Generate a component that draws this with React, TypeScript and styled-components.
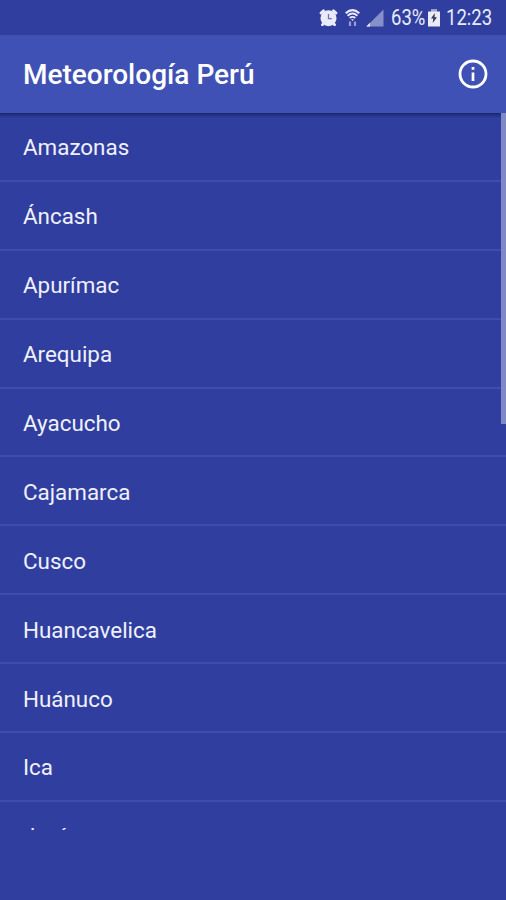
import React from "react";
import styled, { createGlobalStyle } from "styled-components";

const GlobalStyle = createGlobalStyle`
  * { box-sizing: border-box; }
  body { margin: 0; background: #303f9f; }
`;

const Screen = styled.div`
  display: flex;
  flex-direction: column;
  width: 506px;
  height: 900px;
  overflow: hidden;
  background: #303f9f;
  color: #fff;
  font-family: Roboto, "Liberation Sans", sans-serif;
`;

const StatusBar = styled.div`
  display: flex;
  flex: none;
  align-items: center;
  justify-content: flex-end;
  height: 35px;
  padding-right: 14px;
  color: #e9ebfa;
`;

const StatusIcon = styled.svg<{ $gap: number }>`
  display: block;
  flex: none;
  margin-right: ${(p) => p.$gap}px;
`;

const StatusText = styled.span<{ $width: number; $gap?: number }>`
  display: block;
  flex: none;
  width: ${(p) => p.$width}px;
  margin-right: ${(p) => p.$gap ?? 0}px;
  font-size: 21.5px;
  line-height: 35px;
  white-space: nowrap;
  transform: scaleX(0.86);
  transform-origin: left center;
`;

const Toolbar = styled.header`
  display: flex;
  flex: none;
  align-items: center;
  justify-content: space-between;
  height: 78px;
  padding: 0 17px 0 23px;
  background: #3f51b5;
`;

const Title = styled.h1`
  margin: 2px 0 0;
  font-size: 28px;
  font-weight: 500;
  line-height: 34px;
  white-space: nowrap;
`;

const InfoButton = styled.button`
  display: flex;
  padding: 0;
  border: 0;
  background: none;
  color: inherit;
`;

const Viewport = styled.main`
  display: flex;
  flex: none;
  align-items: flex-start;
  height: 716.5px;
  overflow: hidden;
  background: linear-gradient(rgba(14, 22, 80, 0.6), rgba(14, 22, 80, 0) 5px);
`;

const List = styled.ul`
  flex: 1;
  margin: 0 -5px 0 0;
  padding: 0;
  list-style: none;
`;

const Row = styled.li`
  display: flex;
  align-items: center;
  height: 68.9px;
  padding: 2px 23px 0;
  border-bottom: 2px solid #3e4eae;
  color: #eff0fb;
  font-size: 22.4px;
  line-height: 30px;
`;

const ScrollThumb = styled.div`
  flex: none;
  width: 5px;
  height: 311px;
  background: #7f89c4;
`;

const regions = [
  "Amazonas",
  "Áncash",
  "Apurímac",
  "Arequipa",
  "Ayacucho",
  "Cajamarca",
  "Cusco",
  "Huancavelica",
  "Huánuco",
  "Ica",
  "Junín",
];

const AlarmIcon = () => (
  <StatusIcon $gap={7} width="19" height="18" viewBox="0 0 19 18" fill="currentColor">
    <circle cx="9.500" cy="9.200" r="8" />
    <path
      d="M2 4 4.500 1.700M17 4 14.500 1.700M3.400 15.800l1.600-1.600M15.600 15.800l-1.600-1.600"
      fill="none"
      stroke="currentColor"
      strokeWidth="2.800"
      strokeLinecap="round"
    />
    <path d="M9.500 5V9.600H12.800" fill="none" stroke="#6a75b5" strokeWidth="1.300" />
  </StatusIcon>
);

const WifiIcon = () => (
  <StatusIcon $gap={6} width="15" height="18" viewBox="0 0 15 18" fill="none" stroke="currentColor">
    <path d="M.7 4.300Q7.500-2 14.300 4.300" strokeWidth="2" />
    <path d="M2.600 6.700Q7.500 2.500 12.400 6.700" strokeWidth="1.900" />
    <path d="M4.700 9Q7.500 6.700 10.300 9" strokeWidth="1.800" />
    <path d="M6 10.300h3L7.500 12Z" fill="currentColor" stroke="none" />
    <path d="M5 17v-4.500M10 12.500V17" strokeWidth="2.200" opacity=".55" />
  </StatusIcon>
);

const SignalIcon = () => (
  <StatusIcon $gap={7} width="18" height="18" viewBox="0 0 18 18" fill="currentColor">
    <path d="M17.500.5V17.500H.5Z" opacity=".48" />
    <path d="M4 13.800v3.700H.3Z" />
  </StatusIcon>
);

const BatteryIcon = () => (
  <StatusIcon $gap={6} width="12" height="18" viewBox="0 0 12 18" fill="currentColor">
    <path d="M3 .5h6v2H12V17.500H0V2.500h3Z" />
    <path d="M3 .5h6v2H3Z" fill="#a5a9c9" />
    <path d="M6.800 4 3 9.500h2.300l-.6 4.500L9 8.200H6.600Z" fill="#35384f" />
  </StatusIcon>
);

const InfoIcon = () => (
  <svg width="32" height="32" viewBox="0 0 32 32" fill="none" stroke="currentColor">
    <circle cx="16" cy="16" r="13" strokeWidth="2.800" />
    <path d="M16 14.500v8.500M16 9v2.800" strokeWidth="2.700" />
  </svg>
);

export default function App() {
  return (
    <>
      <GlobalStyle />
      <Screen>
        <StatusBar>
          <AlarmIcon />
          <WifiIcon />
          <SignalIcon />
          <StatusText $width={35} $gap={2}>63%</StatusText>
          <BatteryIcon />
          <StatusText $width={46}>12:23</StatusText>
        </StatusBar>
        <Toolbar>
          <Title>Meteorología Perú</Title>
          <InfoButton aria-label="Información">
            <InfoIcon />
          </InfoButton>
        </Toolbar>
        <Viewport>
          <List>
            {regions.map((region) => (
              <Row key={region}>{region}</Row>
            ))}
          </List>
          <ScrollThumb />
        </Viewport>
      </Screen>
    </>
  );
}
